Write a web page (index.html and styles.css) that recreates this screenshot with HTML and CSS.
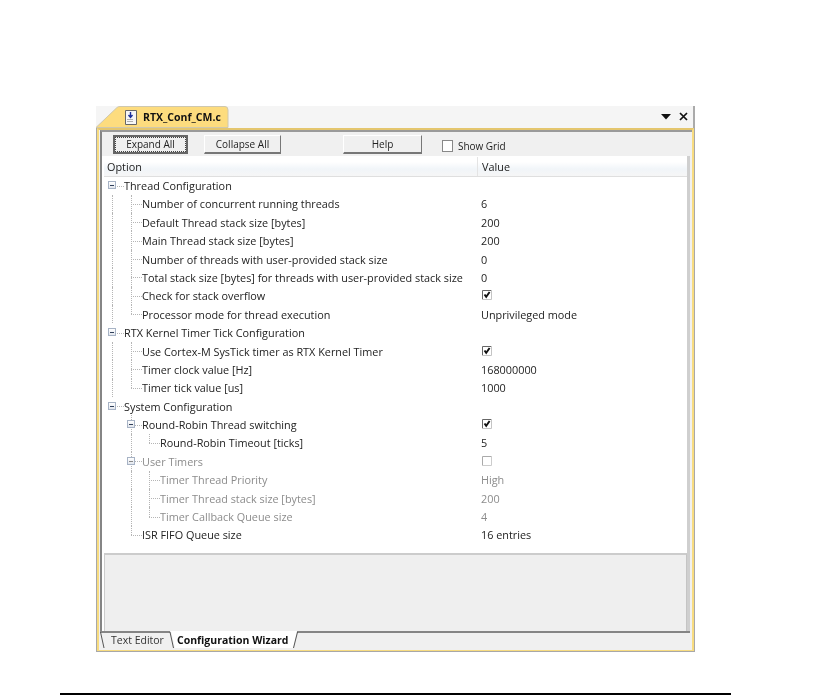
FILE: index.html
```html
<!DOCTYPE html>
<html lang="en">
<head>
<meta charset="utf-8">
<title>RTX_Conf_CM.c</title>
<link rel="stylesheet" href="styles.css">
</head>
<body>
<div class="page">
  <div class="window">
    <div class="tabbar">
      <svg class="tabshape" width="134" height="22" viewBox="0 0 134 22"><path d="M0 21.5 L21 1.5 Q22 0.5 24 0.5 L129 0.5 Q132 0.5 132 4 L132 21.5 Z" fill="#fddc7e" stroke="#cfc8ae"/></svg>
      <div class="file-tab">
        <svg class="fileicon" width="12" height="15" viewBox="0 0 12 15"><path d="M.5 .5H11.5V14.5H.5Z" fill="#f6f6f6" stroke="#666"/><path d="M5.5 2V7M3.5 5L5.5 7.5L7.5 5" fill="none" stroke="#1a2f9a" stroke-width="1.4"/><path d="M2.5 9.5H8.5M2.5 11.5H8.5" stroke="#666" stroke-dasharray="1 1"/></svg>
        <span>RTX_Conf_CM.c</span>
      </div>
      <div class="winctl">
        <svg width="10" height="6" viewBox="0 0 10 6"><path d="M0 0H10L5 5.5Z" fill="#111"/></svg>
        <svg width="9" height="9" viewBox="0 0 9 9"><path d="M1 1L8 8M8 1L1 8" stroke="#111" stroke-width="1.7"/></svg>
      </div>
    </div>
    <div class="frame">
      <div class="inner">
        <div class="toolbar">
          <button class="btn btn-focus"><span>Expand All</span></button>
          <button class="btn btn-collapse">Collapse All</button>
          <button class="btn btn-help">Help</button>
          <label class="grid-check"><span class="box"></span>Show Grid</label>
        </div>
        <div class="panel">
          <div class="head"><div class="col-opt">Option</div><div class="col-val">Value</div></div>
          <div class="tree">
            <div class="row l0"><span class="exp"></span><span class="opt">Thread Configuration</span></div>
            <div class="row l1 trunk"><span class="opt">Number of concurrent running threads</span><span class="val">6</span></div>
            <div class="row l1 trunk"><span class="opt">Default Thread stack size [bytes]</span><span class="val">200</span></div>
            <div class="row l1 trunk"><span class="opt">Main Thread stack size [bytes]</span><span class="val">200</span></div>
            <div class="row l1 trunk"><span class="opt">Number of threads with user-provided stack size</span><span class="val">0</span></div>
            <div class="row l1 trunk"><span class="opt">Total stack size [bytes] for threads with user-provided stack size</span><span class="val">0</span></div>
            <div class="row l1 trunk"><span class="opt">Check for stack overflow</span><span class="val"><svg class="tick" width="10" height="10" viewBox="0 0 10 10"><path class="tick-box" d="M.5 10V.5H10"/><path class="tick-edge" d="M9.5 0V9.5H0"/><path class="tick-mark" d="M2.5 4.5L4.2 6.8L7.6 2"/></svg></span></div>
            <div class="row l1 trunk last"><span class="opt">Processor mode for thread execution</span><span class="val">Unprivileged mode</span></div>
            <div class="row l0"><span class="exp"></span><span class="opt">RTX Kernel Timer Tick Configuration</span></div>
            <div class="row l1 trunk"><span class="opt">Use Cortex-M SysTick timer as RTX Kernel Timer</span><span class="val"><svg class="tick" width="10" height="10" viewBox="0 0 10 10"><path class="tick-box" d="M.5 10V.5H10"/><path class="tick-edge" d="M9.5 0V9.5H0"/><path class="tick-mark" d="M2.5 4.5L4.2 6.8L7.6 2"/></svg></span></div>
            <div class="row l1 trunk"><span class="opt">Timer clock value [Hz]</span><span class="val">168000000</span></div>
            <div class="row l1 trunk last"><span class="opt">Timer tick value [us]</span><span class="val">1000</span></div>
            <div class="row l0"><span class="exp"></span><span class="opt">System Configuration</span></div>
            <div class="row l1"><span class="exp"></span><span class="opt">Round-Robin Thread switching</span><span class="val"><svg class="tick" width="10" height="10" viewBox="0 0 10 10"><path class="tick-box" d="M.5 10V.5H10"/><path class="tick-edge" d="M9.5 0V9.5H0"/><path class="tick-mark" d="M2.5 4.5L4.2 6.8L7.6 2"/></svg></span></div>
            <div class="row l2 last"><span class="opt">Round-Robin Timeout [ticks]</span><span class="val">5</span></div>
            <div class="row l1 off"><span class="exp"></span><span class="opt">User Timers</span><span class="val"><svg class="tick" width="10" height="10" viewBox="0 0 10 10"><path class="tick-box" d="M.5 10V.5H10"/><path class="tick-edge" d="M9.5 0V9.5H0"/></svg></span></div>
            <div class="row l2 off"><span class="opt">Timer Thread Priority</span><span class="val">High</span></div>
            <div class="row l2 off"><span class="opt">Timer Thread stack size [bytes]</span><span class="val">200</span></div>
            <div class="row l2 off last"><span class="opt">Timer Callback Queue size</span><span class="val">4</span></div>
            <div class="row l1 last"><span class="opt">ISR FIFO Queue size</span><span class="val">16 entries</span></div>
          </div>
          <div class="desc"></div>
        </div>
        <div class="tabs-bottom">
          <svg class="tab-outline" width="590" height="19" viewBox="0 0 590 19"><path d="M0 1H70L73 17H0Z" fill="#f0f0f0"/><path d="M71 0H197L193 17H75Z" fill="#fff"/><path d="M0 1H70M197 1H590" fill="none" stroke="#858585" stroke-width="2"/><path d="M0.5 1L4 17M70 1L73.5 17M197.5 1L193.5 17" fill="none" stroke="#555"/></svg>
          <div class="btab btab-text">Text Editor</div>
          <div class="btab btab-wizard">Configuration Wizard</div>
        </div>
      </div>
    </div>
  </div>
  <div class="rule"></div>
</div>
</body>
</html>
```
FILE: styles.css
```css
* { box-sizing: border-box; }
html, body { margin: 0; padding: 0; background: #fff; }
body { width: 834px; height: 695px; overflow: hidden; font-family: "Open Sans", "Noto Sans", sans-serif; font-size: 10.85px; color: #222; }
.page { padding-top: 106px; }
.window { margin-left: 96px; width: 599px; height: 546px; display: flex; flex-direction: column; filter: blur(0.3px); }
.tabbar { height: 22px; flex: none; position: relative; background: #f5f5f5; border-right: 2px solid #aaa; }
.tabshape { position: absolute; left: 0; top: 0; }
.file-tab { position: absolute; left: 29px; top: 2px; height: 18px; display: flex; align-items: center; gap: 6px; font-weight: 700; font-size: 10.5px; color: #111; }
.winctl { position: absolute; right: 5px; top: 6px; display: flex; align-items: center; gap: 8px; }
.frame { flex: 1; min-height: 0; display: flex; border: 1px solid #a8a8a8; border-top: 0; background: #f0f0f0; }
.inner { flex: 1; min-width: 0; display: flex; flex-direction: column; padding-left: 1px; border: 2px solid #f8dc80; border-bottom-width: 1px; border-top-color: #e4c66e; }
.toolbar { height: 26px; flex: none; display: flex; align-items: center; border-top: 2px solid #9a9a9a; border-left: 2px solid #858585; padding-left: 11px; background: #f0f0f0; }
.btn { height: 19px; padding: 0; font: inherit; font-size: 10px; color: #222; background: #f0f0f0; border: 1px solid #fff; border-right-color: #777; border-bottom: 2px solid #777; display: flex; align-items: center; justify-content: center; }
.btn-focus { width: 75px; border: 2px solid #666; }
.btn-focus span { display: flex; align-items: center; justify-content: center; width: 100%; height: 100%; border: 1px dotted #444; }
.btn-collapse { width: 77px; margin-left: 16px; }
.btn-help { width: 79px; margin-left: 62px; }
.grid-check { display: flex; align-items: center; gap: 5px; margin: 3px 0 0 20px; font-size: 10px; letter-spacing: -0.05px; color: #222; }
.box { width: 11px; height: 12px; background: #fff; border: 1px solid #888; display: block; }
.panel { flex: 1; min-height: 0; display: flex; flex-direction: column; background: #fff; border-left: 2px solid #858585; border-right: 3px solid #cfcfcf; margin-right: 2px; padding-left: 3px; }
.head { height: 21px; flex: none; display: flex; align-items: center; padding-top: 1px; background: linear-gradient(#fff 30%, #f1f5f9 65%, #f6f6f6); border-bottom: 1px solid #dfdfdf; margin-left: -1px; }
.col-opt { width: 374px; padding-left: 3px; height: 100%; display: flex; align-items: center; border-right: 1px solid #e4e4e4; }
.col-val { padding-left: 4px; }
.tree { flex: none; height: 376.4px; margin-top: -0.7px; position: relative; }
.row { height: 18.4px; position: relative; display: flex; align-items: center; }
.opt { white-space: nowrap; position: relative; }
.val { position: absolute; left: 376px; top: 0; height: 100%; display: flex; align-items: center; }
.l0 { padding-left: 19px; }
.l1 { padding-left: 37px; }
.l2 { padding-left: 55px; }
.off { color: #8c8c8c; }
.exp { position: absolute; width: 8px; height: 8px; top: 5px; border: 1px solid #a7b3c5; background: linear-gradient(#fff, #e3e7ee); z-index: 1; }
.exp::after { content: ""; position: absolute; left: 1px; right: 1px; top: 2.5px; height: 1px; background: #30405a; }
.l0 .exp { left: 3px; }
.l1 .exp { left: 22px; }
.off .exp::after { background: #888; }
.opt::before { content: ""; position: absolute; right: 100%; top: 50%; border-top: 1px dotted #b5b5b5; }
.l0 .opt::before { width: 7px; }
.l1 .opt::before, .l2 .opt::before { width: 11px; }
.l1::before, .l2::before, .trunk::after, .l2::after { content: ""; position: absolute; top: 0; bottom: 0; border-left: 1px dotted #b5b5b5; }
.l1::before { left: 26px; }
.l2::before { left: 44px; }
.last::before { bottom: 50%; }
.trunk::after { left: 7px; }
.l2::after { left: 26px; }
.tick { display: block; margin: -1px 0 0 1px; }
.tick-box, .tick-edge, .tick-mark { fill: none; }
.tick-box { stroke: #666; }
.tick-edge { stroke: #c4c4c4; }
.tick-mark { stroke: #111; stroke-width: 1.9; }
.off .tick-box { stroke: #aaa; }
.off .tick-edge { stroke: #ccc; }
.desc { flex: 1; min-height: 0; margin-left: -1px; border: 1px solid #c4c4c4; border-top: 2px solid #ccc; border-left-color: #ccc; border-bottom: 0; background: #efefef; }
.tabs-bottom { height: 19px; flex: none; display: flex; align-items: flex-start; background: #f0f0f0; position: relative; }
.tab-outline { position: absolute; left: 0; top: 0; }
.btab { height: 16px; margin-top: 1px; display: flex; align-items: center; position: relative; font-size: 10.5px; }
.btab-text { width: 66px; padding-left: 11px; color: #333; }
.btab-wizard { padding-left: 11px; font-weight: 700; color: #111; }
.rule { margin: 41px 0 0 60px; width: 671px; height: 2px; background: #000; }
```
